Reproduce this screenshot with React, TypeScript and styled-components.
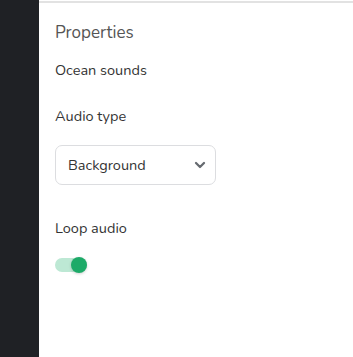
import React, { useState } from 'react';
import styled, { createGlobalStyle } from 'styled-components';

const GlobalStyle = createGlobalStyle`
  html, body {
    margin: 0;
    padding: 0;
    background: #ffffff;
  }
  body {
    font-family: 'Nunito', 'Lato', 'Noto Sans', sans-serif;
  }
`;

const Layout = styled.div`
  display: flex;
  width: 353px;
  height: 357px;
  overflow: hidden;
`;

const Sidebar = styled.div`
  width: 39px;
  flex-shrink: 0;
  background-color: #1f2125;
`;

const Panel = styled.div`
  flex: 1;
  display: flex;
  flex-direction: column;
  padding: 16px 16px 0 16px;
  border-top: 2px solid #e2e2e2;
  margin-top: 1px;
  background: #ffffff;
`;

const PanelTitle = styled.h2`
  margin: 4px 0 0 0;
  font-size: 17px;
  font-weight: 400;
  color: #555555;
  line-height: 20px;
`;

const Label = styled.div<{ $top: number }>`
  margin-top: ${(p) => p.$top}px;
  font-size: 14.5px;
  color: #333333;
  line-height: 18px;
`;

const SelectBox = styled.div`
  margin-top: 20px;
  width: 161px;
  height: 40px;
  box-sizing: border-box;
  border: 1px solid #dcdde0;
  border-radius: 7px;
  display: flex;
  align-items: center;
  justify-content: space-between;
  padding: 0 7px 0 12px;
  font-size: 14.5px;
  color: #333333;
`;

const Toggle = styled.div<{ $on: boolean }>`
  margin-top: 21px;
  position: relative;
  width: 32px;
  height: 14px;
  border-radius: 7px;
  background-color: ${(p) => (p.$on ? '#bde8d4' : '#dddddd')};
  cursor: pointer;
`;

const Knob = styled.div<{ $on: boolean }>`
  position: absolute;
  top: -1px;
  left: ${(p) => (p.$on ? '16px' : '0px')};
  width: 16px;
  height: 16px;
  border-radius: 50%;
  background-color: ${(p) => (p.$on ? '#1daa68' : '#f5f5f5')};
  box-shadow: 0 1px 3px rgba(0, 0, 0, 0.18);
`;

const Chevron = () => (
  <svg width="16" height="16" viewBox="0 0 24 24" fill="none" stroke="#666a70" strokeWidth="3.4" strokeLinecap="round" strokeLinejoin="round">
    <polyline points="6 9 12 15 18 9" />
  </svg>
);

const App: React.FC = () => {
  const [loop, setLoop] = useState(true);

  return (
    <Layout>
      <GlobalStyle />
      <Sidebar />
      <Panel>
        <PanelTitle>Properties</PanelTitle>
        <Label $top={18}>Ocean sounds</Label>
        <Label $top={28}>Audio type</Label>
        <SelectBox>
          <span>Background</span>
          <Chevron />
        </SelectBox>
        <Label $top={34}>Loop audio</Label>
        <Toggle $on={loop} onClick={() => setLoop(!loop)}>
          <Knob $on={loop} />
        </Toggle>
      </Panel>
    </Layout>
  );
};

export default App;
